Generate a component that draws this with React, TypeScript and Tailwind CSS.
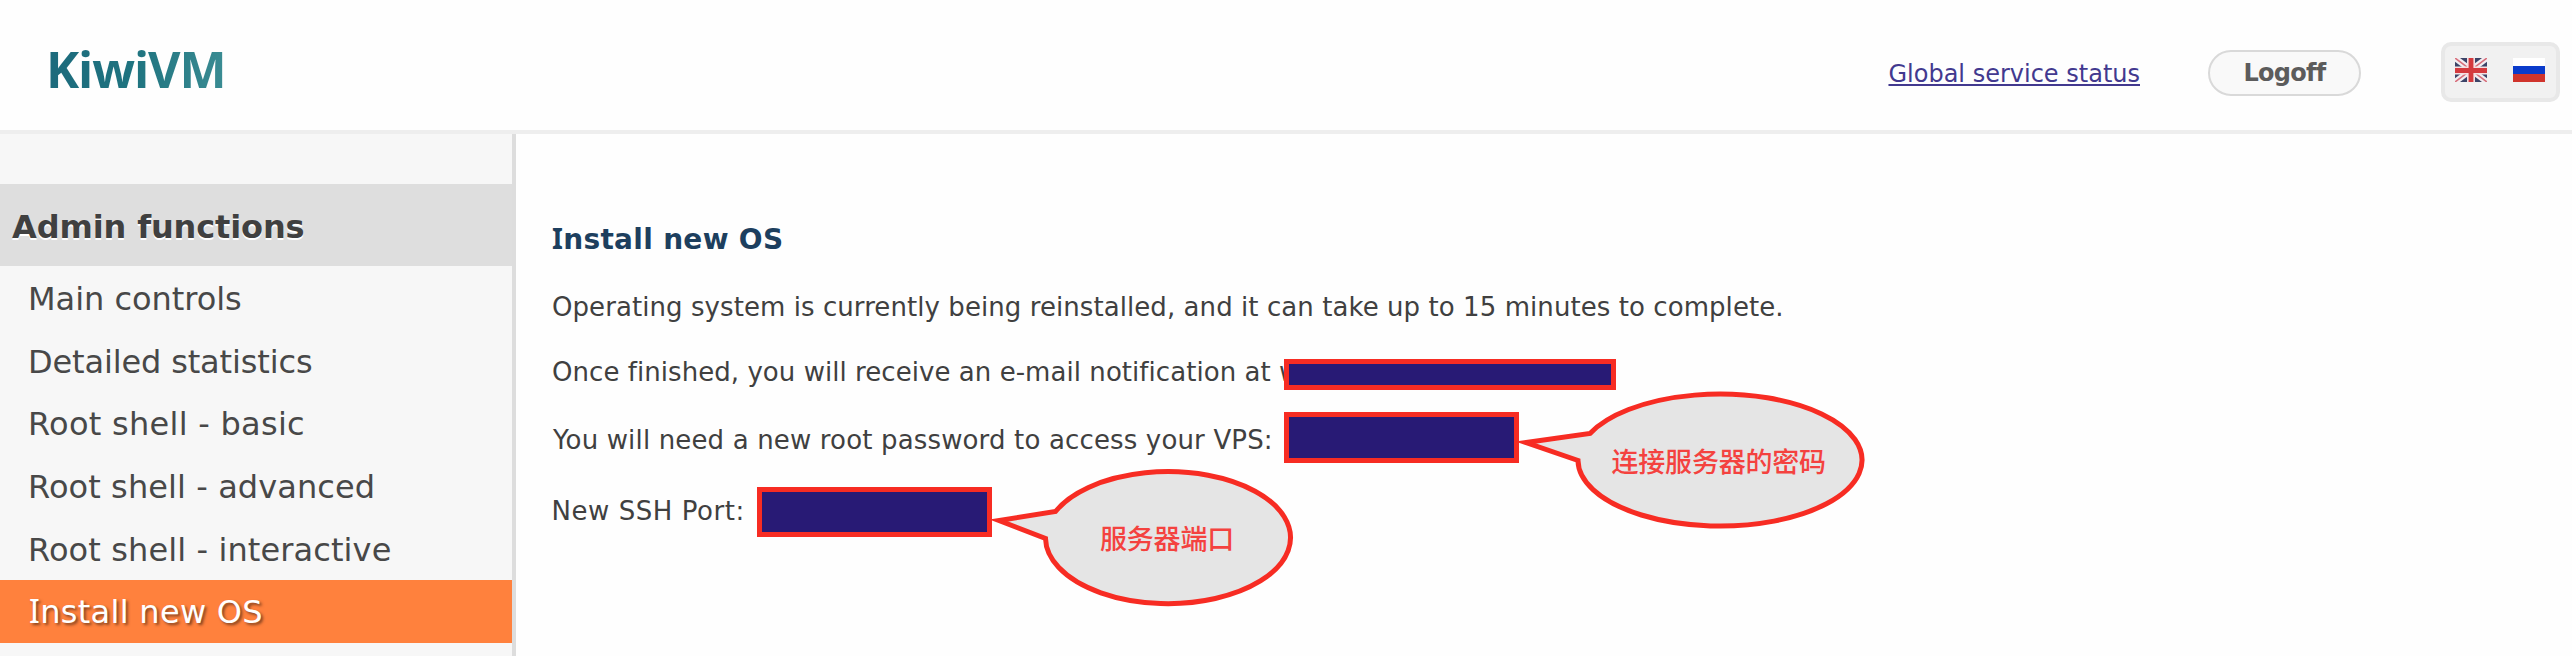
type NavItem = { label: string; size: string };

const NAV: NavItem[] = [
  { label: "Main controls", size: "h-[63px] tracking-[-0.03px]" },
  { label: "Detailed statistics", size: "h-[62px] tracking-[-0.14px]" },
  { label: "Root shell - basic", size: "h-[63px] tracking-[0.27px]" },
  { label: "Root shell - advanced", size: "h-[63px] tracking-[0.09px]" },
  { label: "Root shell - interactive", size: "h-[63px] tracking-[0.11px]" },
];

function UkFlag() {
  return (
    <svg width="32" height="24" viewBox="0 0 32 24" className="block">
      <rect width="32" height="24" fill="#3c4468" />
      <path d="M0 0L32 24M32 0L0 24" stroke="#f2eef2" strokeWidth="6" />
      <path d="M0 0L32 24M32 0L0 24" stroke="#d8707c" strokeWidth="1.6" />
      <path d="M16 0V24M0 12.5H32" stroke="#f4e0e2" strokeWidth="8" />
      <path d="M16 0V24M0 12.5H32" stroke="#d43a3e" strokeWidth="4.8" />
    </svg>
  );
}

function RuFlag() {
  return (
    <svg width="32" height="24" viewBox="0 0 32 24" className="block">
      <rect width="32" height="8" fill="#ffffff" />
      <rect y="8" width="32" height="8" fill="#0a3bcb" />
      <rect y="16" width="32" height="8" fill="#d0342c" />
    </svg>
  );
}

function Redaction({ className }: { className: string }) {
  return <div className={`absolute border-[5px] border-[#f72c23] bg-[#281a75] ${className}`} />;
}

type CalloutProps = { className: string; width: number; outline: string; text: string; textClass: string };

function Callout({ className, width, outline, text, textClass }: CalloutProps) {
  return (
    <div className={`absolute h-[138px] ${className}`}>
      <svg width={width} height="138" viewBox={`0 0 ${width} 138`} className="block overflow-visible">
        <path d={outline} fill="#e5e5e5" stroke="#f72c23" strokeWidth="5" strokeMiterlimit="10" />
      </svg>
      <span
        className={`absolute whitespace-nowrap font-['Noto_Sans_CJK_SC',sans-serif] text-[27px] leading-[36px] font-medium text-[#f4423f] ${textClass}`}
      >
        {text}
      </span>
    </div>
  );
}

export default function App() {
  return (
    <div className="relative flex h-[656px] w-[2572px] flex-col overflow-hidden bg-[#fefefe] font-['DejaVu_Sans',Verdana,sans-serif] text-[#404040]">
      <header className="flex h-[134px] shrink-0 items-start border-b-4 border-[#eeeeee]">
        <div className="ml-[46px] mt-[35px] bg-linear-to-r from-[#1c6a7c] via-[#1f7480] to-[#3a8c93] bg-clip-text font-['Open_Sans',sans-serif] text-[50px] leading-[68px] font-bold tracking-[-1.1px] text-transparent">
          KiwiVM
        </div>
        <a
          href="#"
          className="ml-auto mt-[58px] whitespace-nowrap text-[24px] leading-[32px] text-[#42398f] underline decoration-2 underline-offset-[2px]"
        >
          Global service status
        </a>
        <button className="ml-[68px] mt-[50px] flex h-[46px] w-[153px] items-center justify-center rounded-full border-2 border-[#d9d9d9] bg-[#f9f9f9] text-[24px] leading-[32px] font-bold tracking-[-0.7px] text-[#5c5c5c]">
          Logoff
        </button>
        <div className="ml-[80px] mr-[12px] mt-[42px] flex h-[60px] w-[119px] gap-[26px] rounded-[10px] border-4 border-[#e8e8e8] bg-[#f1f1f1] pl-[10px] pt-[12px]">
          <UkFlag />
          <RuFlag />
        </div>
      </header>

      <div className="flex min-h-0 flex-1">
        <aside className="flex w-[516px] shrink-0 flex-col border-r-4 border-[#dddddd] bg-[#f7f7f7] pt-[50px]">
          <h2 className="flex h-[82px] shrink-0 items-center bg-[#dedede] pl-[12px] pt-[4px] text-[32px] leading-[40px] font-bold tracking-[-0.13px] text-[#404040] [text-shadow:0_2px_0_#ffffff]">
            Admin functions
          </h2>
          <nav className="flex flex-col">
            {NAV.map((item) => (
              <a
                key={item.label}
                href="#"
                className={`flex shrink-0 items-center whitespace-pre pl-[28px] pt-[3px] text-[32px] leading-[40px] text-[#484848] ${item.size}`}
              >
                {item.label}
              </a>
            ))}
            <a
              href="#"
              className="block h-[63px] shrink-0 whitespace-pre bg-[#ff813d] pl-[29px] pt-[12px] text-[32px] leading-[40px] tracking-[0.3px] text-white [text-shadow:2px_2px_3px_#00000080]"
            >
              <span className="font-['Noto_Sans',sans-serif] leading-[1]">I</span>nstall new OS
            </a>
          </nav>
        </aside>

        <main className="flex min-w-0 flex-1 flex-col whitespace-nowrap pt-[86px] text-[26px] leading-[40px]">
          <h1 className="h-[40px] pl-[36px] text-[28px] font-bold tracking-[0.3px] text-[#1d3f5e]">
            <span className="font-['Noto_Sans',sans-serif] leading-[1]">I</span>nstall new OS
          </h1>
          <p className="mt-[27px] h-[40px] pl-[36px] tracking-[0.07px]">
            Operating system is currently being reinstalled, and it can take up to 15 minutes to complete.
          </p>
          <p className="mt-[25px] h-[40px] pl-[36px] tracking-[0.052px]">
            Once finished, you will receive an e-mail notification at w
          </p>
          <p className="mt-[28px] h-[40px] pl-[37px] tracking-[0.155px]">
            You will need a new root password to access your VPS:
          </p>
          <p className="mt-[31px] h-[40px] pl-[35.5px] tracking-[0.55px]">New SSH Port:</p>
        </main>
      </div>

      <Redaction className="left-[1284px] top-[359px] h-[31px] w-[332px]" />
      <Redaction className="left-[1284px] top-[412px] h-[51px] w-[235px]" />
      <Redaction className="left-[757px] top-[487px] h-[50px] w-[235px]" />
      <Callout
        className="left-[1519px] top-[391px]"
        width={348}
        outline="M71 42.5 A142 66 0 1 1 59 69.5 L7 51.5 Z"
        text="连接服务器的密码"
        textClass="left-[92.5px] top-[51.5px] tracking-[-0.2px]"
      />
      <Callout
        className="left-[991px] top-[469px]"
        width={304}
        outline="M64.5 42.5 A122.5 66 0 1 1 54.5 69.5 L8 51.5 Z"
        text="服务器端口"
        textClass="left-[109px] top-[51px] tracking-[-0.2px]"
      />
    </div>
  );
}
